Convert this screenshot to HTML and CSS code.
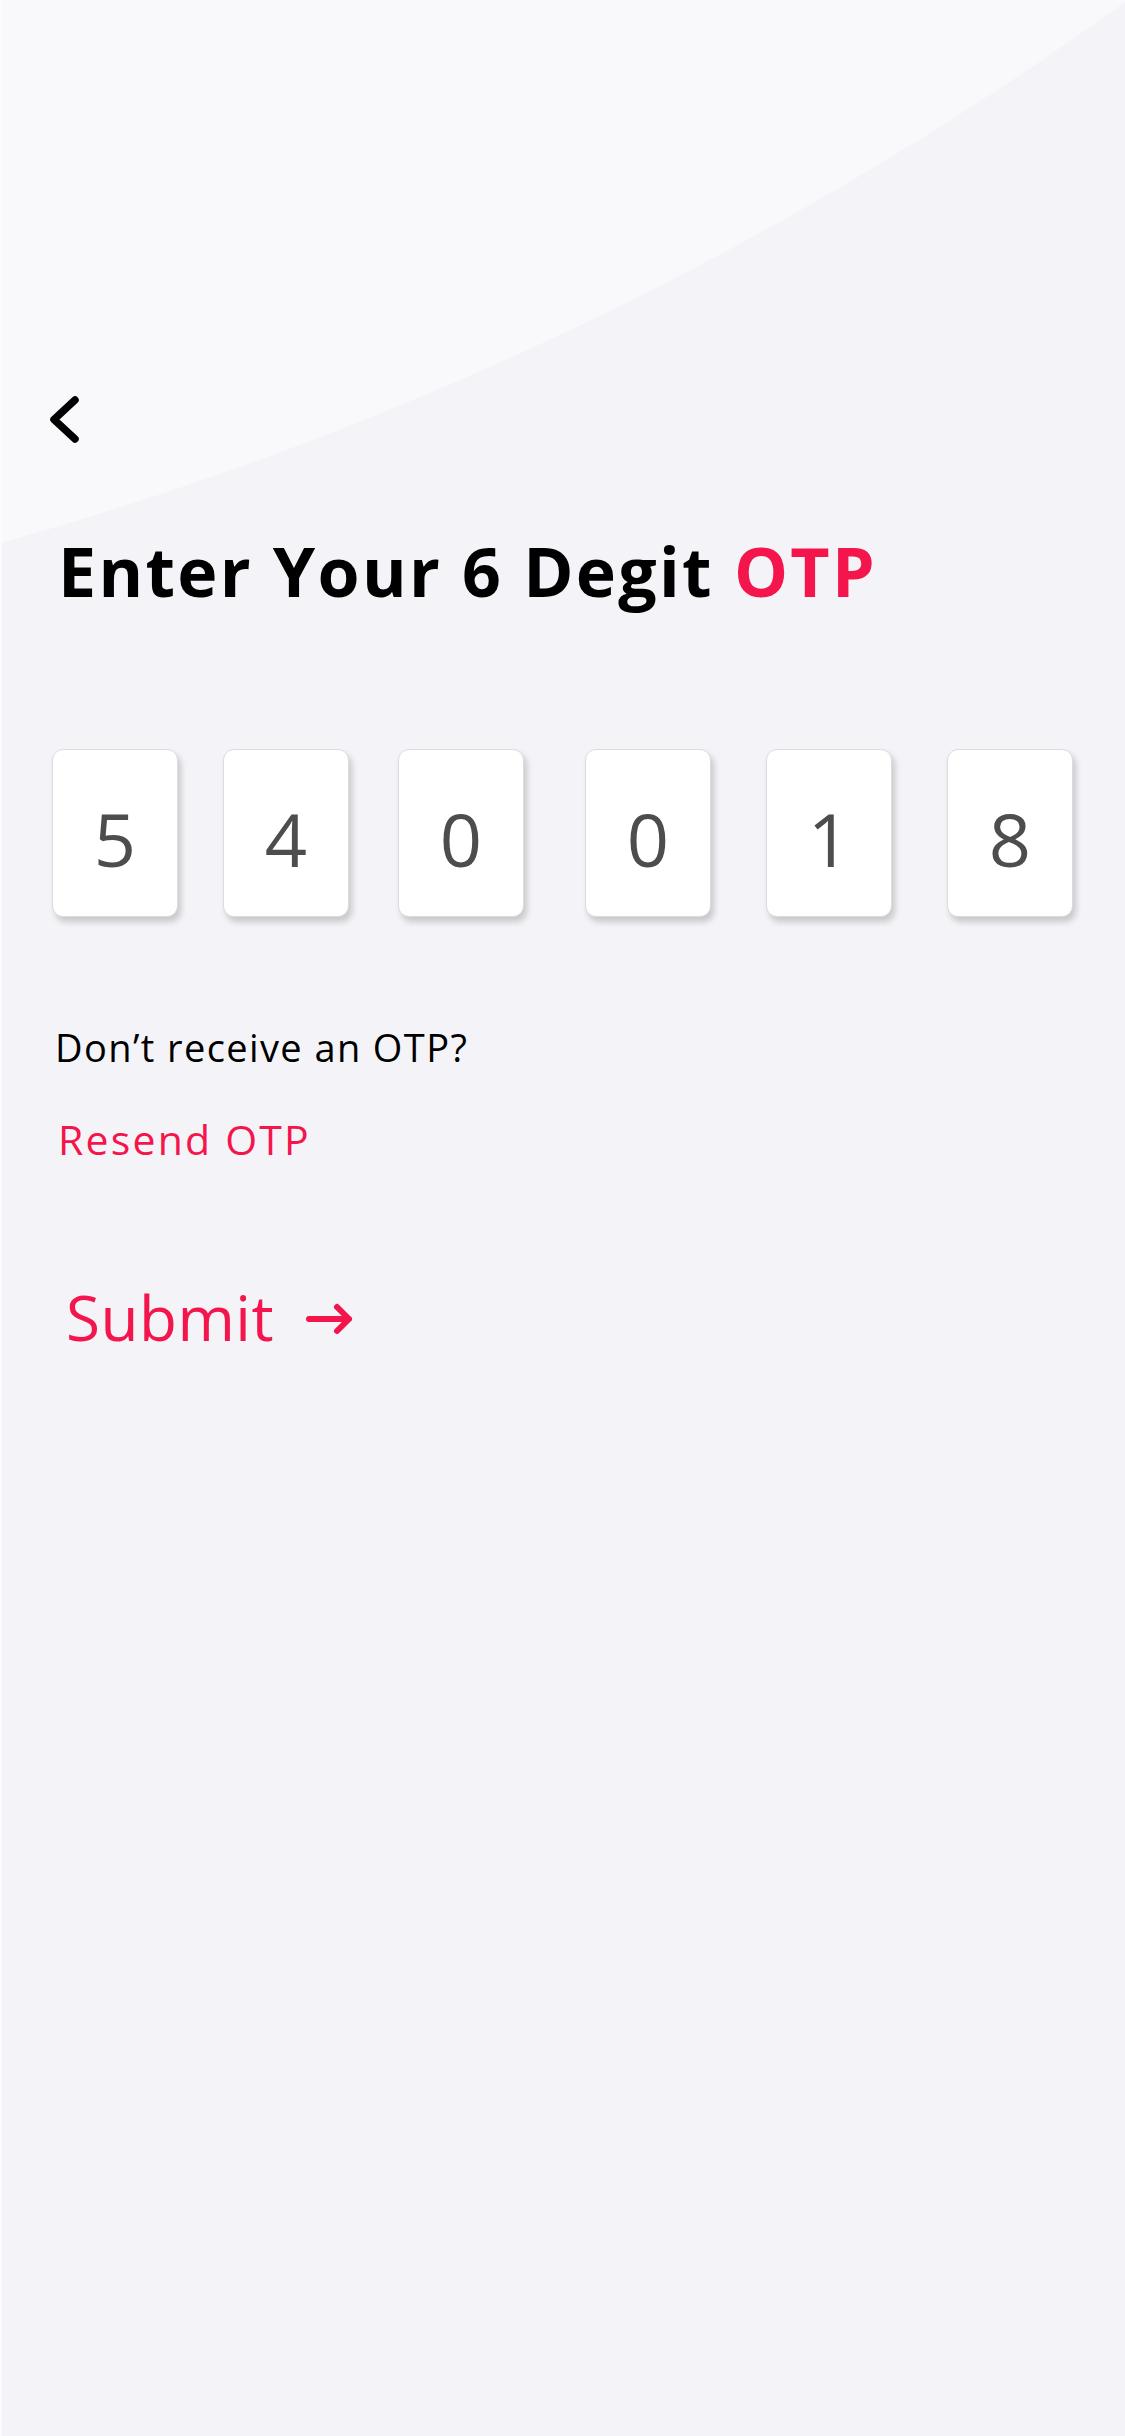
FILE: index.html
```html
<!DOCTYPE html>
<html lang="en">
<head>
<meta charset="utf-8">
<title>Enter OTP</title>
<link rel="stylesheet" href="styles.css">
</head>
<body>
<main class="screen">
  <button class="back" aria-label="Back">
    <svg width="40" height="56" viewBox="0 0 40 56"><path d="M31 8 L10 27.5 L31 47" fill="none" stroke="#000" stroke-width="7.5" stroke-linecap="round" stroke-linejoin="round"/></svg>
  </button>
  <h1 class="title">Enter Your 6 Degit <span class="accent">OTP</span></h1>
  <div class="otp">
    <div class="otp-box">5</div>
    <div class="otp-box">4</div>
    <div class="otp-box">0</div>
    <div class="otp-box">0</div>
    <div class="otp-box">1</div>
    <div class="otp-box">8</div>
  </div>
  <p class="hint">Don’t receive an OTP?</p>
  <a class="resend" href="#">Resend OTP</a>
  <button class="submit">
    <span>Submit</span>
    <svg width="48" height="34" viewBox="0 0 48 34"><path d="M3 17 H43 M31 5 L43 17 L31 29" fill="none" stroke="#f4154c" stroke-width="6" stroke-linecap="round" stroke-linejoin="round"/></svg>
  </button>
</main>
</body>
</html>
```

FILE: styles.css
```css
html, body {
  margin: 0;
  padding: 0;
}
body {
  width: 1125px;
  min-height: 2436px;
  box-sizing: border-box;
  border-left: 2px solid #fcfcfe;
  background-color: #f4f4f8;
  background-image: radial-gradient(circle 3600px at -959px -2891px, #f9f9fc 3565px, #f4f4f8 3566px);
  background-repeat: no-repeat;
  font-family: "Open Sans", "Liberation Sans", sans-serif;
  color: #000;
}
.screen {
  display: flex;
  flex-direction: column;
  align-items: flex-start;
  padding: 392px 50px 0 42px;
}
.back {
  display: block;
  width: 40px;
  height: 56px;
  padding: 0;
  border: 0;
  background: none;
}
.back svg { display: block; }
.title {
  margin: 83px 0 0 14px;
  font-size: 68px;
  line-height: 80px;
  font-weight: 700;
  letter-spacing: 2.3px;
}
.accent { color: #f4154c; }
.otp {
  display: flex;
  margin: 138px 0 0 8px;
}
.otp-box {
  width: 126px;
  height: 168px;
  box-sizing: border-box;
  display: flex;
  align-items: center;
  justify-content: center;
  padding-top: 10px;
  background: #fff;
  border: 1px solid #dcdcdc;
  border-radius: 11px;
  box-shadow: 3px 5px 6px rgba(0, 0, 0, 0.18);
  font-size: 74px;
  color: #4d4d4d;
}
.otp-box:nth-child(2) { margin-left: 45px; }
.otp-box:nth-child(3) { margin-left: 49px; }
.otp-box:nth-child(4) { margin-left: 61px; }
.otp-box:nth-child(5) { margin-left: 55px; }
.otp-box:nth-child(6) { margin-left: 55px; }
.hint {
  margin: 106px 0 0 11px;
  font-size: 38px;
  line-height: 48px;
  font-weight: 400;
  letter-spacing: 1.4px;
}
.resend {
  margin: 44px 0 0 14px;
  font-size: 41px;
  line-height: 48px;
  color: #f4154c;
  text-decoration: none;
  letter-spacing: 2.2px;
}
.submit {
  display: flex;
  align-items: center;
  gap: 32px;
  margin: 116px 0 0 22px;
  padding: 0;
  border: 0;
  background: none;
  font-family: inherit;
  font-size: 62px;
  line-height: 76px;
  letter-spacing: 0.5px;
  color: #f4154c;
}
.submit svg { display: block; margin-top: 4px; }
```
